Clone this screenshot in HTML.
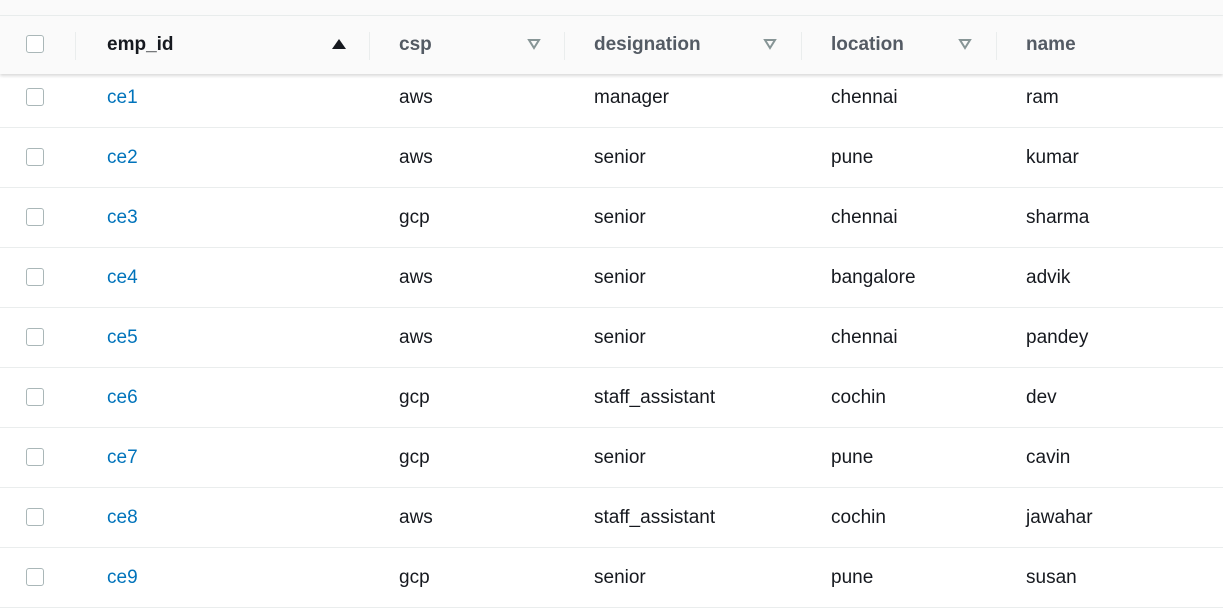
<!DOCTYPE html>
<html><head><style>
body{margin:0;width:1223px;height:600px;overflow:hidden;background:#fff;font-family:"Liberation Sans",sans-serif;font-size:19px;color:#16191f;position:relative}
.top{position:absolute;left:0;top:0;width:1223px;height:15px;background:#fafafa;border-bottom:1px solid #eaeded}
.hdr{position:absolute;left:0;top:16px;width:1223px;height:58px;background:#fafafa;box-shadow:0 2px 3px rgba(0,0,0,0.15);z-index:2}
.cb{position:absolute;width:16px;height:16px;border:1.5px solid #aab7b8;border-radius:3px;background:#fff}
.t{position:absolute;white-space:nowrap;line-height:20px}
.h{font-weight:bold;color:#545b64}
.sep{position:absolute;top:16px;width:1px;height:28px;background:#eaeded}
.row{position:absolute;left:0;width:1223px;border-bottom:1px solid #eaeded}
a{color:#0073bb;text-decoration:none}
</style></head><body>
<div class="top"></div>
<div class="hdr">
<div class="cb" style="left:26px;top:19px"></div>
<div class="sep" style="left:75px"></div>
<div class="t h" style="left:107px;top:19px;color:#16191f">emp_id</div>
<svg style="position:absolute;left:331px;top:22px" width="16" height="12"><polygon points="8,1 15,11 1,11" fill="#16191f"/></svg>
<div class="sep" style="left:369px"></div>
<div class="t h" style="left:399px;top:19px">csp</div>
<svg style="position:absolute;left:527px;top:22px" width="14" height="12"><polygon points="2,2 12,2 7,10" fill="none" stroke="#879596" stroke-width="2"/></svg>
<div class="sep" style="left:564px"></div>
<div class="t h" style="left:594px;top:19px">designation</div>
<svg style="position:absolute;left:763px;top:22px" width="14" height="12"><polygon points="2,2 12,2 7,10" fill="none" stroke="#879596" stroke-width="2"/></svg>
<div class="sep" style="left:801px"></div>
<div class="t h" style="left:831px;top:19px">location</div>
<svg style="position:absolute;left:958px;top:22px" width="14" height="12"><polygon points="2,2 12,2 7,10" fill="none" stroke="#879596" stroke-width="2"/></svg>
<div class="sep" style="left:996px"></div>
<div class="t h" style="left:1026px;top:19px">name</div>
</div>
<div id="rows"></div>
<script>
var d=[["ce1","aws","manager","chennai","ram"],["ce2","aws","senior","pune","kumar"],["ce3","gcp","senior","chennai","sharma"],["ce4","aws","senior","bangalore","advik"],["ce5","aws","senior","chennai","pandey"],["ce6","gcp","staff_assistant","cochin","dev"],["ce7","gcp","senior","pune","cavin"],["ce8","aws","staff_assistant","cochin","jawahar"],["ce9","gcp","senior","pune","susan"]];
var h="";
d.forEach(function(r,i){var c=97+60*i;var top=i==0?74:127+60*(i-1)+1;var bot=127+60*i;
h+='<div class="row" style="top:'+top+'px;height:'+(bot-top)+'px"></div>';
h+='<div class="cb" style="left:26px;top:'+(c-9)+'px"></div>';
h+='<div class="t" style="left:107px;top:'+(c-9)+'px"><a>'+r[0]+'</a></div>';
var xs=[399,594,831,1026];
for(var k=1;k<5;k++)h+='<div class="t" style="left:'+xs[k-1]+'px;top:'+(c-9)+'px">'+r[k]+'</div>';});
document.getElementById("rows").innerHTML=h;
</script>
</body></html>
